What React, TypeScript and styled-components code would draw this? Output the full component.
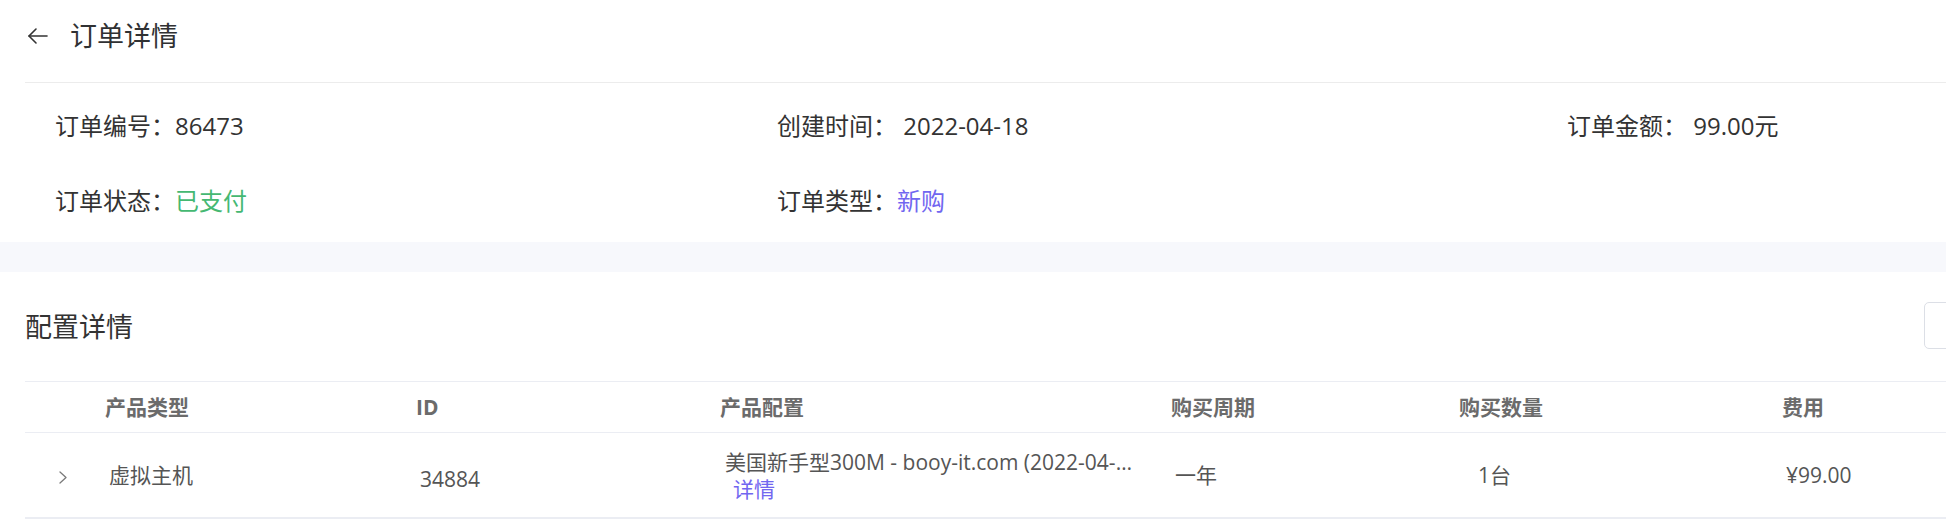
import React from "react";
import styled, { createGlobalStyle } from "styled-components";

const Global = createGlobalStyle`
  html, body {
    margin: 0;
    padding: 0;
    background: #ffffff;
    overflow: hidden;
  }
  body {
    font-family: "Open Sans", "Noto Sans CJK SC", sans-serif;
    color: #333333;
  }
`;

const Page = styled.div`
  width: 2044px;
  background: #ffffff;
`;

const Header = styled.div`
  margin-left: 25px;
  height: 83px;
  box-sizing: border-box;
  border-bottom: 1px solid #ececec;
  display: flex;
  align-items: flex-start;
  padding-top: 22px;
`;

const HeaderRow = styled.div`
  display: flex;
  align-items: center;
  height: 28px;
  gap: 21px;
`;

const BackButton = styled.button`
  border: none;
  background: none;
  padding: 0;
  width: 24px;
  height: 18px;
  display: flex;
  align-items: center;
  cursor: pointer;
`;

const PageTitle = styled.h1`
  margin: 0;
  font-size: 27px;
  line-height: 28px;
  font-weight: 400;
  color: #303133;
`;

const InfoGrid = styled.div`
  display: grid;
  grid-template-columns: 722px 790px auto;
  row-gap: 51px;
  padding: 31px 0 29px 55px;
`;

const InfoItem = styled.div`
  font-size: 24px;
  line-height: 24px;
  color: #333333;
  white-space: pre;
`;

const InfoValue = styled.span<{ $tone?: "green" | "purple" }>`
  color: ${(p) =>
    p.$tone === "green" ? "#45b872" : p.$tone === "purple" ? "#7166f0" : "#333333"};
`;

const Band = styled.div`
  height: 30px;
  background: #f7f8fc;
`;

const Section = styled.section`
  padding: 30px 0 0 25px;
`;

const SectionHead = styled.div`
  display: flex;
  align-items: center;
  justify-content: space-between;
  height: 47px;
  margin-bottom: 32px;
`;

const SectionTitle = styled.h2`
  margin: 0;
  font-size: 27px;
  line-height: 28px;
  font-weight: 400;
  color: #333333;
  padding-top: 3px;
`;

const OutlineButton = styled.button`
  width: 120px;
  height: 47px;
  box-sizing: border-box;
  border: 1px solid #dcdfe6;
  border-radius: 5px;
  background: #ffffff;
  padding: 0 0 0 30px;
  text-align: left;
  font-family: inherit;
  font-size: 18px;
  color: #606266;
`;

const cols = "68px 311px 304px 451px 288px 323px 1fr";

const Table = styled.div`
  border-top: 1px solid #ebedf3;
`;

const HeadRow = styled.div`
  display: grid;
  grid-template-columns: ${cols};
  height: 51px;
  box-sizing: border-box;
  border-bottom: 1px solid #ebedf3;
  align-items: center;
`;

const HeadCell = styled.div`
  padding-left: 12px;
  font-size: 21px;
  line-height: 22px;
  font-weight: 700;
  color: #6b6b6b;
`;

const BodyRow = styled.div`
  display: grid;
  grid-template-columns: ${cols};
  height: 86px;
  box-sizing: border-box;
  border-bottom: 2px solid #ebedf3;
  align-items: center;
`;

const BodyCell = styled.div<{ $shift?: number; $pad?: number }>`
  padding-left: ${(p) => (p.$pad ? p.$pad : 16)}px;
  padding-top: ${(p) => (p.$shift ? p.$shift : 0)}px;
  font-size: 21px;
  line-height: 22px;
  color: #555555;
  min-width: 0;
`;

const ExpandCell = styled.div`
  display: flex;
  justify-content: center;
  padding-left: 7px;
  padding-top: 4px;
`;

const ConfigCell = styled.div`
  padding-left: 17px;
  min-width: 0;
  display: flex;
  flex-direction: column;
  padding-top: 1px;
`;

const ConfigText = styled.div`
  font-size: 21px;
  line-height: 27px;
  color: #555555;
  width: 408px;
  white-space: nowrap;
  overflow: hidden;
  text-overflow: ellipsis;
`;

const DetailLink = styled.a`
  font-size: 21px;
  line-height: 27px;
  color: #7166f0;
  margin-left: 8px;
  text-decoration: none;
  cursor: pointer;
`;

const ArrowIcon = () => (
  <svg width="24" height="18" viewBox="0 0 24 18" fill="none">
    <path d="M4 9 H22" stroke="#333" strokeWidth="1.6" strokeLinecap="round" />
    <path d="M11 2 L4 9 L11 16" stroke="#333" strokeWidth="1.6" strokeLinecap="round" strokeLinejoin="round" />
  </svg>
);

const Chevron = () => (
  <svg width="10" height="13" viewBox="0 0 10 13" fill="none">
    <path d="M2 1 L8 6.5 L2 12" stroke="#7a7a7a" strokeWidth="1.3" strokeLinecap="round" strokeLinejoin="round" />
  </svg>
);

export default function App() {
  return (
    <Page>
      <Global />
      <Header>
        <HeaderRow>
          <BackButton aria-label="返回">
            <ArrowIcon />
          </BackButton>
          <PageTitle>订单详情</PageTitle>
        </HeaderRow>
      </Header>
      <InfoGrid>
        <InfoItem>
          订单编号：<InfoValue>86473</InfoValue>
        </InfoItem>
        <InfoItem>
          创建时间： <InfoValue>2022-04-18</InfoValue>
        </InfoItem>
        <InfoItem>
          订单金额： <InfoValue>99.00元</InfoValue>
        </InfoItem>
        <InfoItem>
          订单状态：<InfoValue $tone="green">已支付</InfoValue>
        </InfoItem>
        <InfoItem>
          订单类型：<InfoValue $tone="purple">新购</InfoValue>
        </InfoItem>
      </InfoGrid>
      <Band />
      <Section>
        <SectionHead>
          <SectionTitle>配置详情</SectionTitle>
          <OutlineButton>续费</OutlineButton>
        </SectionHead>
        <Table>
          <HeadRow>
            <div />
            <HeadCell>产品类型</HeadCell>
            <HeadCell>ID</HeadCell>
            <HeadCell>产品配置</HeadCell>
            <HeadCell>购买周期</HeadCell>
            <HeadCell>购买数量</HeadCell>
            <HeadCell>费用</HeadCell>
          </HeadRow>
          <BodyRow>
            <ExpandCell>
              <Chevron />
            </ExpandCell>
            <BodyCell>虚拟主机</BodyCell>
            <BodyCell $shift={8}>34884</BodyCell>
            <ConfigCell>
              <ConfigText>美国新手型300M - booy-it.com (2022-04-18 ~ 2023-04-18)</ConfigText>
              <DetailLink>详情</DetailLink>
            </ConfigCell>
            <BodyCell>一年</BodyCell>
            <BodyCell $pad={31}>1台</BodyCell>
            <BodyCell>¥99.00</BodyCell>
          </BodyRow>
        </Table>
      </Section>
    </Page>
  );
}
